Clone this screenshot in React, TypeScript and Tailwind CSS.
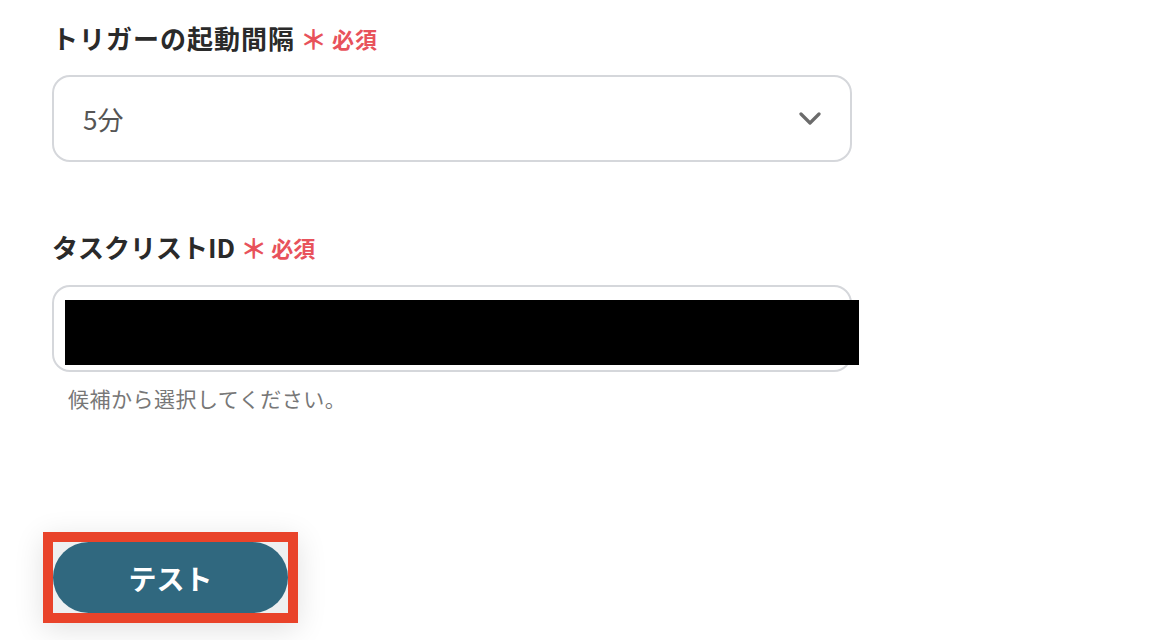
import React from "react";

const font = { fontFamily: '"Noto Sans CJK JP", "Noto Sans", sans-serif' };

const Required: React.FC = () => (
  <span className="ml-[5px] flex items-center text-[22px] font-bold text-[#e8525b]">
    <span className="mr-[4px] text-[27px] leading-none">＊</span>
    必須
  </span>
);

const App: React.FC = () => {
  return (
    <div className="min-h-screen bg-white px-[52px] pt-[20px] text-[#2a2a2a]" style={font}>
      <div className="w-[800px]">
        {/* Trigger interval */}
        <div className="flex h-[36px] items-center text-[26px] font-bold leading-[36px] tracking-[1px]">
          トリガーの起動間隔
          <Required />
        </div>
        <div className="mt-[19px] flex h-[87px] items-center justify-between rounded-[18px] border-2 border-[#d5d7db] pl-[29px] pr-[29px]">
          <span className="text-[26px] text-[#555]">5分</span>
          <svg width="22" height="13" viewBox="0 0 22 13" fill="none">
            <path d="M2 2l9 9 9-9" stroke="#6b6b6b" strokeWidth="3.2" strokeLinecap="round" strokeLinejoin="round" />
          </svg>
        </div>

        {/* Task list ID */}
        <div className="mt-[67px] flex h-[36px] items-center text-[26px] font-bold leading-[36px]">
          タスクリストID
          <Required />
        </div>
        <div className="relative mt-[20px] h-[87px] rounded-[18px] border-2 border-[#d5d7db]">
          <div className="absolute left-[11px] top-[13px] h-[65px] w-[794px] bg-black" />
        </div>
        <p className="mt-[12px] pl-[16px] text-[21px] leading-[28px] tracking-[0.5px] text-[#777]">候補から選択してください。</p>

        {/* Test button */}
        <div className="ml-[-9px] mt-[120px] h-[91px] w-[255px] border-[10px] border-[#e9432a] bg-[#eef0f1] shadow-[0_6px_28px_rgba(0,0,0,0.12)]">
          <button className="flex h-full w-full items-center justify-center rounded-full bg-[#30687f] text-[28px] font-bold text-white">
            テスト
          </button>
        </div>
      </div>
    </div>
  );
};

export default App;
